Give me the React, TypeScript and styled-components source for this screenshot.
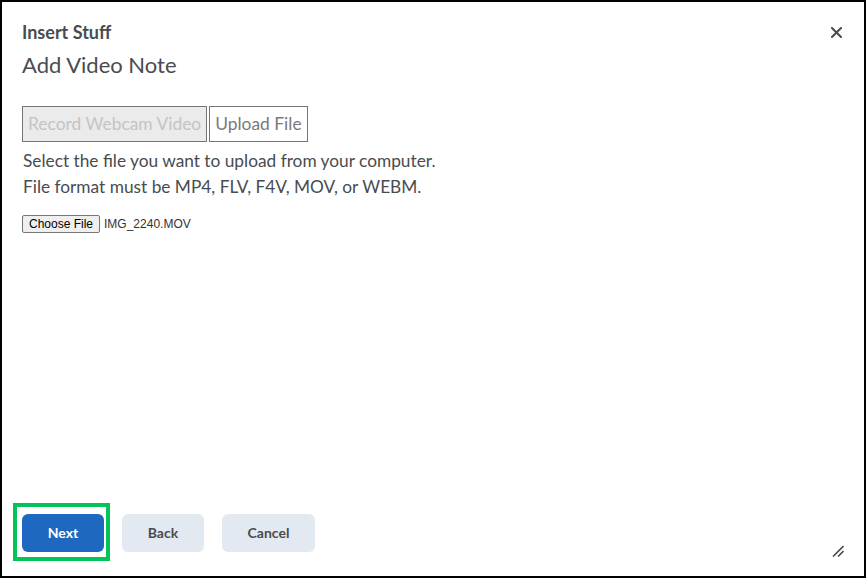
import React from "react";
import styled, { createGlobalStyle } from "styled-components";

const Global = createGlobalStyle`
  html, body { margin: 0; padding: 0; background: #ffffff; }
  * { box-sizing: border-box; }
`;

const Dialog = styled.div`
  position: relative;
  width: 866px;
  height: 578px;
  border: 2px solid #000;
  background: #fff;
  display: flex;
  flex-direction: column;
  padding: 20px 20px 0 20px;
  font-family: Lato, "Open Sans", sans-serif;
  color: #494c4e;
`;

const Header = styled.div`
  display: flex;
  justify-content: space-between;
  align-items: flex-start;
`;

const Titles = styled.div`
  display: flex;
  flex-direction: column;
  gap: 8px;
`;

const Kicker = styled.div`
  font-size: 18px;
  font-weight: 700;
  line-height: 1.2;
`;

const Title = styled.h1`
  margin: 0;
  font-size: 22px;
  font-weight: 400;
  line-height: 1.2;
`;

const CloseButton = styled.button`
  margin-top: 4px;
  margin-right: 1px;
  width: 13px;
  height: 13px;
  padding: 0;
  border: none;
  background: transparent;
  display: flex;
  align-items: center;
  justify-content: center;
  cursor: pointer;
`;

const Body = styled.div`
  flex: 1;
  display: flex;
  flex-direction: column;
  padding-top: 28px;
`;

const Tabs = styled.div`
  display: flex;
  gap: 2px;
`;

const Tab = styled.button<{ $active?: boolean }>`
  height: 36px;
  padding: 0 5px;
  border: 1px solid #767676;
  background: ${(p) => (p.$active ? "#ebebeb" : "#ffffff")};
  color: ${(p) => (p.$active ? "#c4c4c4" : "#7a7a7a")};
  font-family: Lato, "Open Sans", sans-serif;
  font-size: 17.4px;
  line-height: 1;
`;

const Help = styled.p`
  margin: 6px 0 0 1px;
  font-size: 17.3px;
  line-height: 26px;
`;

const FileRow = styled.div`
  margin-top: 15px;
  display: flex;
  align-items: center;
  gap: 4px;
  font-family: "Liberation Sans", Arial, sans-serif;
  font-size: 12px;
`;

const ChooseButton = styled.button`
  height: 18px;
  min-height: 18px;
  padding: 0 6px;
  border: 1px solid #767676;
  border-radius: 2px;
  background: #efefef;
  color: #000;
  font-family: "Liberation Sans", Arial, sans-serif;
  font-size: 12px;
  line-height: 1;
`;

const FileName = styled.span`
  color: #333;
`;

const Footer = styled.div`
  display: flex;
  gap: 18px;
  padding-bottom: 24px;
`;

const Highlight = styled.div`
  margin: -11px -6px -9px -9px;
  padding: 7px 2px 5px 5px;
  border: 4px solid #00c35a;
  display: flex;
`;

const Btn = styled.button<{ $primary?: boolean; $w: number }>`
  width: ${(p) => p.$w}px;
  height: 38px;
  padding: 0 0 2px;
  border: none;
  border-radius: 6px;
  background: ${(p) => (p.$primary ? "#1e68c1" : "#e3e9f1")};
  color: ${(p) => (p.$primary ? "#ffffff" : "#494c4e")};
  font-family: Lato, "Open Sans", sans-serif;
  font-size: 14px;
  font-weight: 700;
`;

const Grip = styled.div`
  position: absolute;
  right: 20px;
  bottom: 23px;
  width: 12px;
  height: 12px;
`;

export default function App() {
  return (
    <>
      <Global />
      <Dialog>
        <Header>
          <Titles>
            <Kicker>Insert Stuff</Kicker>
            <Title>Add Video Note</Title>
          </Titles>
          <CloseButton aria-label="Close">
            <svg width="11" height="11" viewBox="0 0 11 11">
              <path d="M1 1 L10 10 M10 1 L1 10" stroke="#494c4e" strokeWidth="2" strokeLinecap="square" />
            </svg>
          </CloseButton>
        </Header>
        <Body>
          <Tabs>
            <Tab $active>Record Webcam Video</Tab>
            <Tab>Upload File</Tab>
          </Tabs>
          <Help>
            Select the file you want to upload from your computer.
            <br />
            File format must be MP4, FLV, F4V, MOV, or WEBM.
          </Help>
          <FileRow>
            <ChooseButton>Choose File</ChooseButton>
            <FileName>IMG_2240.MOV</FileName>
          </FileRow>
        </Body>
        <Footer>
          <Highlight>
            <Btn $primary $w={82}>Next</Btn>
          </Highlight>
          <Btn $w={82}>Back</Btn>
          <Btn $w={93}>Cancel</Btn>
        </Footer>
        <Grip>
          <svg width="12" height="12" viewBox="0 0 12 12">
            <path d="M1 11.5 L11.5 1 M6 11.5 L11.5 6" stroke="#494c4e" strokeWidth="1.6" />
          </svg>
        </Grip>
      </Dialog>
    </>
  );
}
